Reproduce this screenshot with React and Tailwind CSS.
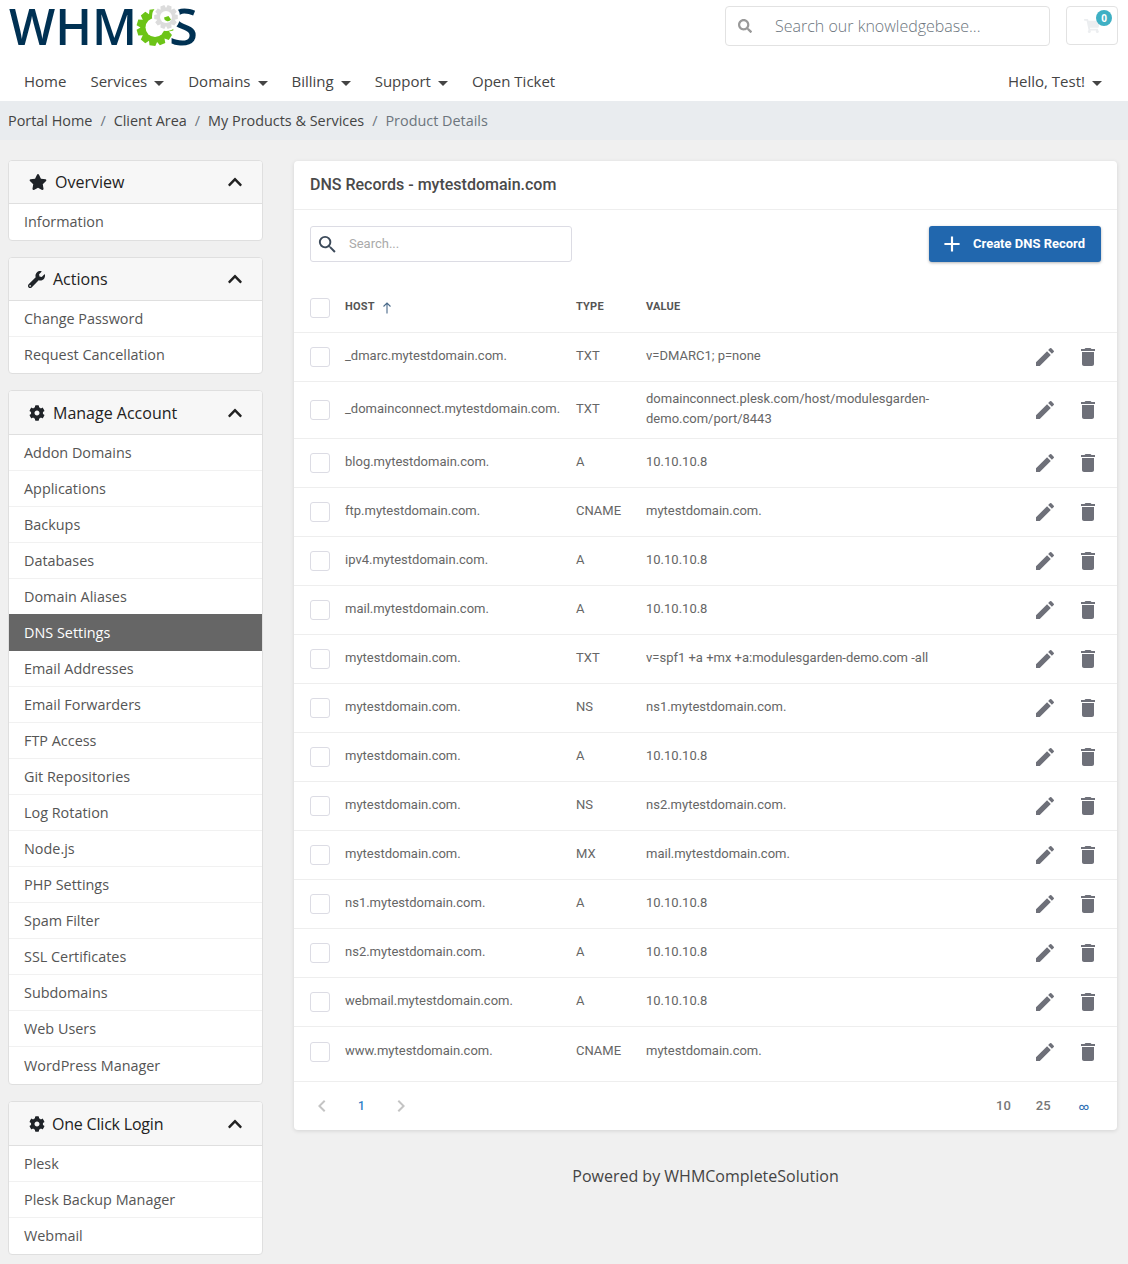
import { FaChevronUp, FaCog, FaSearch, FaShoppingCart, FaStar, FaWrench } from 'react-icons/fa';
import { MdAdd, MdChevronLeft, MdChevronRight, MdDelete, MdEdit, MdSearch } from 'react-icons/md';

const navItems = [
    { label: 'Services' },
    { label: 'Domains' },
    { label: 'Billing' },
    { label: 'Support' },
];

const sidebar = [
    {
        title: 'Overview',
        icon: FaStar,
        iconClass: 'mr-2 size-[18px]',
        headerClass: 'h-[43px]',
        items: ['Information'],
    },
    {
        title: 'Actions',
        icon: FaWrench,
        iconClass: 'mr-2 -ml-px size-[17px]',
        headerClass: 'h-[43px]',
        items: ['Change Password', 'Request Cancellation'],
    },
    {
        title: 'Manage Account',
        icon: FaCog,
        iconClass: 'mr-2 size-[16px]',
        headerClass: 'h-[44px]',
        items: [
            'Addon Domains',
            'Applications',
            'Backups',
            'Databases',
            'Domain Aliases',
            'DNS Settings',
            'Email Addresses',
            'Email Forwarders',
            'FTP Access',
            'Git Repositories',
            'Log Rotation',
            'Node.js',
            'PHP Settings',
            'Spam Filter',
            'SSL Certificates',
            'Subdomains',
            'Web Users',
            'WordPress Manager',
        ],
    },
    {
        title: 'One Click Login',
        icon: FaCog,
        iconClass: 'mr-[7px] size-[16px]',
        titleClass: 'tracking-[-0.2px]',
        headerClass: 'h-[44px]',
        items: ['Plesk', 'Plesk Backup Manager', 'Webmail'],
    },
];

const records = [
    ['_dmarc.mytestdomain.com.', 'TXT', 'v=DMARC1; p=none'],
    ['_domainconnect.mytestdomain.com.', 'TXT', 'domainconnect.plesk.com/host/modulesgarden-demo.com/port/8443'],
    ['blog.mytestdomain.com.', 'A', '10.10.10.8'],
    ['ftp.mytestdomain.com.', 'CNAME', 'mytestdomain.com.'],
    ['ipv4.mytestdomain.com.', 'A', '10.10.10.8'],
    ['mail.mytestdomain.com.', 'A', '10.10.10.8'],
    ['mytestdomain.com.', 'TXT', 'v=spf1 +a +mx +a:modulesgarden-demo.com -all'],
    ['mytestdomain.com.', 'NS', 'ns1.mytestdomain.com.'],
    ['mytestdomain.com.', 'A', '10.10.10.8'],
    ['mytestdomain.com.', 'NS', 'ns2.mytestdomain.com.'],
    ['mytestdomain.com.', 'MX', 'mail.mytestdomain.com.'],
    ['ns1.mytestdomain.com.', 'A', '10.10.10.8'],
    ['ns2.mytestdomain.com.', 'A', '10.10.10.8'],
    ['webmail.mytestdomain.com.', 'A', '10.10.10.8'],
    ['www.mytestdomain.com.', 'CNAME', 'mytestdomain.com.'],
];

function gearPoints(cx, cy, outer, inner, teeth) {
    const pts = [];
    const step = (Math.PI * 2) / teeth;
    for (let i = 0; i < teeth; i++) {
        const a = i * step;
        const offsets = [
            [-0.5, inner],
            [-0.28, outer],
            [0.28, outer],
            [0.5, inner],
        ];
        offsets.forEach(([o, r]) => {
            const t = a + o * step;
            pts.push(`${(cx + Math.cos(t) * r).toFixed(1)},${(cy + Math.sin(t) * r).toFixed(1)}`);
        });
    }
    return pts.join(' ');
}

function Logo() {
    return (
        <svg width="192" height="48" viewBox="0 0 192 48" className="block overflow-visible">
            <text
                x="0"
                y="40"
                textLength="128"
                lengthAdjust="spacingAndGlyphs"
                fontFamily="'Open Sans', sans-serif"
                fontWeight="600"
                fontSize="50"
                fill="#003153"
            >
                WHM
            </text>
            <text
                x="160"
                y="40"
                textLength="29"
                lengthAdjust="spacingAndGlyphs"
                fontFamily="'Open Sans', sans-serif"
                fontWeight="600"
                fontSize="50"
                fill="#003153"
            >
                S
            </text>
            <polygon points={gearPoints(146, 22.5, 18.5, 14.5, 11)} fill="#6cc417" />
            <circle cx="146" cy="22.5" r="9.5" fill="#fff" />
            <circle cx="157" cy="12" r="14" fill="#fff" />
            <polygon points={gearPoints(157, 12, 12, 9, 10)} fill="#dcdcdc" />
            <circle cx="157" cy="12" r="6" fill="#fff" />
            <path d="M155 12.5a3.8 3.8 0 0 0 7 2l-2.5-3.5z" fill="#6cc417" />
        </svg>
    );
}

function Caret() {
    return <span className="ml-[7px] inline-block border-x-[5px] border-t-[5px] border-x-transparent border-t-[#444] align-middle" />;
}

function Header() {
    return (
        <header className="bg-white">
            <div className="flex h-[64px] items-start justify-between pl-[9px] pr-[10px] pt-[5px]">
                <Logo />
                <div className="flex items-start gap-4 pt-[1px]">
                    <div className="flex h-[40px] w-[325px] items-center rounded border border-[#e2e2e2] pl-[12px] text-[16px] font-light text-[#6c757d]">
                        <FaSearch className="mr-[23px] size-[14px] text-[#999]" />
                        Search our knowledgebase...
                    </div>
                    <div className="relative flex h-[39px] w-[52px] items-center justify-center rounded border border-[#e2e2e2]">
                        <FaShoppingCart className="size-[16px] text-[#eceef0]" />
                        <span className="absolute right-[5px] top-[3px] flex size-[16px] items-center justify-center rounded-full bg-[#3fb0c4] text-[10px] font-bold text-white">
                            0
                        </span>
                    </div>
                </div>
            </div>
            <nav className="flex h-[37px] items-center justify-between pb-[2px] pl-6 pr-[26px] text-[15px] text-[#444]">
                <div className="flex items-center gap-6">
                    <span>Home</span>
                    {navItems.map((item) => (
                        <span key={item.label}>
                            {item.label}
                            <Caret />
                        </span>
                    ))}
                    <span>Open Ticket</span>
                </div>
                <span>
                    Hello, Test!
                    <Caret />
                </span>
            </nav>
            <div className="flex h-[39px] items-center gap-2 bg-[#e9ecef] pl-2 text-[14.4px] text-[#444]">
                <span>Portal Home</span>
                <span className="text-[#6c757d]">/</span>
                <span>Client Area</span>
                <span className="text-[#6c757d]">/</span>
                <span>My Products &amp; Services</span>
                <span className="text-[#6c757d]">/</span>
                <span className="text-[#6c757d]">Product Details</span>
            </div>
        </header>
    );
}

function SidebarItem({ label }) {
    if (label === 'DNS Settings') {
        return <div className="relative -mt-px flex h-[37px] items-center bg-[#666] px-[15px] text-[14.4px] text-white">{label}</div>;
    }
    if (label === 'WordPress Manager') {
        return <div className="flex h-[37px] items-center px-[15px] text-[14.4px] text-[#555]">{label}</div>;
    }
    return <div className="flex h-[36px] items-center border-b border-[#f1f1f1] px-[15px] text-[14.4px] text-[#555] last:border-b-0">{label}</div>;
}

function SidebarCard({ card }) {
    const Icon = card.icon;
    return (
        <div className="overflow-hidden rounded border border-[#dfdfdf] bg-white">
            <div className={`flex items-center border-b border-[#dfdfdf] bg-[#f7f7f7] pl-5 pr-[19px] text-[16px] text-[#222] ${card.headerClass}`}>
                <Icon className={`text-[#1f2328] ${card.iconClass}`} />
                <span className={`flex-1 ${card.titleClass || ''}`}>{card.title}</span>
                <FaChevronUp className="size-[16px] text-[#222]" />
            </div>
            {card.items.map((item) => (
                <SidebarItem key={item} label={item} />
            ))}
        </div>
    );
}

function Checkbox() {
    return <span className="block size-5 shrink-0 rounded-[3px] border border-[#dcdce4] bg-white" />;
}

function RecordRow({ record }) {
    const [host, type, value] = record;
    const long = value.startsWith('domainconnect');
    return (
        <div className={`flex items-center border-b border-[#eee] px-4 last:border-b-0 ${long ? 'h-[57px]' : 'h-[49px]'}`}>
            <Checkbox />
            <span className="-mt-[2px] ml-[15px] w-[231px] shrink-0">{host}</span>
            <span className="-mt-[2px] w-[70px] shrink-0">{type}</span>
            <span className="-mt-[2px] w-[300px] shrink-0 leading-[20px]">
                {long ? (
                    <>
                        domainconnect.plesk.com/host/modulesgarden-
                        <br />
                        demo.com/port/8443
                    </>
                ) : (
                    value
                )}
            </span>
            <span className="ml-auto flex items-center gap-[19px] pr-[1px] text-[#6e7079]">
                <MdEdit className="size-6" />
                <MdDelete className="size-6" />
            </span>
        </div>
    );
}

function RecordsCard() {
    return (
        <div className="overflow-hidden rounded-sm bg-white shadow-[0_1px_4px_rgba(0,0,0,0.12)]">
            <div className="flex h-[49px] items-center border-b border-[#eee] px-4 text-[16px] font-medium text-[#4a4a4a]">
                DNS Records - mytestdomain.com
            </div>
            <div className="flex items-center justify-between px-4 pt-4">
                <div className="flex h-[36px] w-[262px] items-center rounded-[3px] border border-[#dcdce4] pl-[5px] text-[13px] text-[#aaa]">
                    <MdSearch className="mr-[10px] size-[23px] text-[#3c4a5a]" />
                    Search...
                </div>
                <button className="flex h-[36px] w-[172px] items-center rounded-[3px] bg-[#2167ae] pl-[10px] text-[13px] font-bold text-white shadow-[0_1px_3px_rgba(0,0,0,0.3)]">
                    <MdAdd className="mr-[8px] size-[26px]" />
                    Create DNS Record
                </button>
            </div>
            <div className="mt-[21px] flex h-[49px] items-center px-4 text-[11px] font-bold tracking-[0.2px] text-[#555]">
                <Checkbox />
                <span className="ml-[15px] flex w-[231px] shrink-0 items-center gap-[7px]">
                    HOST
                    <svg width="10" height="12" viewBox="0 0 10 12" fill="none" stroke="#4a6a8a" strokeWidth="1.1">
                        <path d="M5 11.5V1M1.5 4.5 5 1l3.5 3.5" />
                    </svg>
                </span>
                <span className="w-[70px] shrink-0">TYPE</span>
                <span>VALUE</span>
            </div>
            <div className="border-t border-[#eee] text-[13px] text-[#666]">
                {records.map((record, i) => (
                    <RecordRow key={i} record={record} />
                ))}
            </div>
            <div className="mt-[5px] flex h-[49px] items-center border-t border-[#eee] pl-4 pr-[28px] text-[13px] font-medium text-[#777]">
                <MdChevronLeft className="size-6 text-[#c4c4c4]" />
                <span className="ml-6 text-[12px] text-[#2f80c8]">1</span>
                <MdChevronRight className="ml-6 size-6 text-[#c4c4c4]" />
                <span className="ml-auto">10</span>
                <span className="ml-[25px]">25</span>
                <span className="ml-[28px] text-[10px] text-[#2f6fb5]">∞</span>
            </div>
        </div>
    );
}

export default function App() {
    return (
        <div className="min-h-[1264px] bg-[#f0f0f0] font-['Open_Sans',sans-serif]">
            <Header />
            <div className="flex items-start pl-2 pr-[11px] pt-5">
                <aside className="flex w-[255px] shrink-0 flex-col gap-4">
                    {sidebar.map((card) => (
                        <SidebarCard key={card.title} card={card} />
                    ))}
                </aside>
                <main className="ml-[31px] mt-px flex-1 font-['Roboto',sans-serif]">
                    <RecordsCard />
                    <p className="mt-[34px] text-center font-['Open_Sans',sans-serif] text-[16px] text-[#444]">
                        Powered by WHMCompleteSolution
                    </p>
                </main>
            </div>
        </div>
    );
}
